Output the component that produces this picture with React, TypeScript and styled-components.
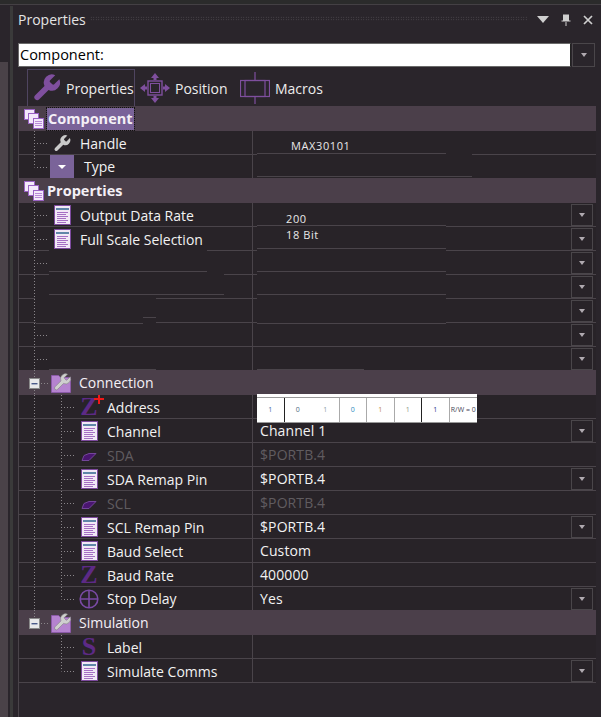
import React from 'react';
import styled, { createGlobalStyle } from 'styled-components';

const LINE = '#4a444a';
const ROW_BG = '#282328';
const HEADER_BG = '#4b3f4a';
const PURPLE = '#7a4a9c';
const SELECT = '#7a6399';

const GlobalStyle = createGlobalStyle`
	html, body {
		margin: 0;
		padding: 0;
		background: #2a252b;
	}
	#root {
		width: 601px;
		height: 717px;
		overflow: hidden;
	}
`;

const Shell = styled.div`
	display: flex;
	width: 601px;
	height: 717px;
	background: #2a252b;
	font-family: 'Open Sans', 'Noto Sans', sans-serif;
	font-size: 14px;
	color: #f0f0f0;
`;

const Rail = styled.div`
	flex: 0 0 18px;
	margin-top: 5px;
	border-top: 1px solid #2a252b;
	background:
		linear-gradient(90deg, transparent 0 10px, #3a3a3a 10px 13px, transparent 13px),
		linear-gradient(180deg, transparent 0 56px, #4a4248 56px) 0 0 / 8px 100% no-repeat;
`;

const Panel = styled.div`
	flex: 1;
	display: flex;
	flex-direction: column;
	min-width: 0;
`;

const TopEdge = styled.div`
	height: 4px;
	margin-left: -18px;
	border-bottom: 1px solid #444044;
	background: #2b2b2b;
	flex: none;
`;

const TitleBar = styled.div`
	display: flex;
	align-items: center;
	height: 27px;
	padding-top: 1px;
	margin-top: 0;
	flex: none;
	color: #e4e4e4;
	line-height: 27px;
`;

const TitleText = styled.span`
	width: 72px;
	flex: none;
`;

const Grip = styled.div`
	width: 437px;
	height: 5px;
	flex: none;
	margin-top: -3px;
	background-image: radial-gradient(#555055 0.7px, transparent 0.8px);
	background-size: 2.5px 2.5px;
`;

const TitleIcons = styled.div`
	display: flex;
	align-items: center;
	margin-left: 10px;
	color: #cfcfcf;
	gap: 12px;
`;

const ComboRow = styled.div`
	display: flex;
	height: 24px;
	margin-top: 10px;
	flex: none;
	gap: 1px;
`;

const ComboField = styled.div`
	width: 553px;
	box-sizing: border-box;
	background: #fff;
	border: 1px solid #6a6a6a;
	border-right-color: #222;
	color: #000;
	padding-left: 1px;
	line-height: 21px;
	font-size: 14.5px;
`;

const ArrowButton = styled.div<{ $size?: number }>`
	flex: none;
	box-sizing: border-box;
	width: ${p => p.$size ?? 22}px;
	height: ${p => p.$size ?? 22}px;
	border: 1px solid #4a464a;
	display: flex;
	align-items: center;
	justify-content: center;
	&::after {
		content: '';
		border-left: 3.5px solid transparent;
		border-right: 3.5px solid transparent;
		border-top: 4px solid #b0aab0;
	}
`;

const ComboButton = styled(ArrowButton)`
	width: 23px;
	height: 24px;
`;

const TabBar = styled.div`
	display: flex;
	align-items: stretch;
	height: 37px;
	margin-top: 2px;
	padding-left: 9px;
	flex: none;
`;

const Tab = styled.div<{ $active?: boolean; $width: number; $gap: number }>`
	display: flex;
	align-items: center;
	box-sizing: border-box;
	width: ${p => p.$width}px;
	gap: ${p => p.$gap}px;
	padding-left: ${p => (p.$active ? 5 : 4)}px;
	border: 1px solid ${p => (p.$active ? '#4f4560' : 'transparent')};
	border-bottom: 0;
	color: #ececec;
`;

const PropertyGrid = styled.div`
	flex: 1;
	width: 578px;
	box-sizing: border-box;
	border-left: 1px solid ${LINE};
`;

const Header = styled.div`
	display: flex;
	align-items: center;
	height: 25px;
	width: 577px;
	background: ${HEADER_BG};
`;

const HeaderLabel = styled.span<{ $bold?: boolean; $selected?: boolean }>`
	font-weight: ${p => (p.$bold ? 700 : 400)};
	font-size: ${p => (p.$bold ? 14.5 : 14)}px;
	line-height: 22px;
	margin-left: ${p => (p.$bold ? 3 : 7)}px;
	padding: 0 ${p => (p.$selected ? 1 : 0)}px;
	background: ${p => (p.$selected ? SELECT : 'transparent')};
	outline: ${p => (p.$selected ? '1px dotted #111' : 'none')};
	color: #f4f0f6;
`;

const Row = styled.div<{ $last?: boolean; $end?: boolean }>`
	position: relative;
	display: flex;
	width: 577px;
	height: ${p => (p.$last ? 23 : 24)}px;
	background: ${ROW_BG};
	box-shadow: ${p => (p.$last ? 'none' : `inset 0 -1px 0 ${LINE}`)};
`;

const NameCell = styled.div`
	display: flex;
	align-items: center;
	width: 233px;
	flex: none;
	overflow: hidden;
`;

const Label = styled.span<{ $disabled?: boolean }>`
	margin-left: 8px;
	white-space: nowrap;
	line-height: 23px;
	color: ${p => (p.$disabled ? '#605c60' : '#f2f2f2')};
`;

const ValueCell = styled.div`
	position: relative;
	flex: 1;
	display: flex;
	align-items: flex-start;
	border-left: 1px solid ${LINE};
`;

const Value = styled.div<{ $disabled?: boolean }>`
	flex: 1;
	padding-left: 7px;
	line-height: 23px;
	letter-spacing: 0.1px;
	color: ${p => (p.$disabled ? '#605c60' : '#f2f2f2')};
`;

const PastedValue = styled.div<{ $indent: number; $top: number }>`
	flex: 1;
	padding-left: ${p => p.$indent}px;
	padding-top: ${p => p.$top}px;
	font-size: 11px;
	line-height: 15px;
	letter-spacing: 0.6px;
	color: #e8e8e8;
`;

const DropButton = styled(ArrowButton)`
	margin: 1px 3px 0 0;
`;

const Mark = styled.i<{ $x: number; $w: number; $dy: number; $hide?: boolean }>`
	position: absolute;
	z-index: 1;
	left: ${p => p.$x - 19}px;
	width: ${p => p.$w}px;
	bottom: ${p => p.$dy}px;
	height: 1px;
	background: ${p => (p.$hide ? ROW_BG : LINE)};
`;

const BitField = styled.div`
	position: absolute;
	z-index: 2;
	left: 4px;
	top: -1px;
	width: 220px;
	height: 29px;
	box-sizing: border-box;
	padding: 3px 0 2px;
	background: #fff;
`;

const BitGrid = styled.div`
	display: grid;
	grid-template-columns: repeat(8, 1fr);
	height: 100%;
	border-top: 1px solid #999;
	border-bottom: 1px solid #999;
`;

const Bit = styled.div<{ $color: string; $divider: string }>`
	display: flex;
	align-items: center;
	justify-content: center;
	text-align: center;
	font-size: 7px;
	line-height: 8px;
	color: ${p => p.$color};
	border-right: 1px solid ${p => p.$divider};
	&:last-child {
		border-right: 0;
	}
`;

const TypeButton = styled.div`
	width: 24px;
	height: 23px;
	flex: none;
	margin-left: -2px;
	margin-right: 2px;
	background: ${SELECT};
	display: flex;
	align-items: center;
	justify-content: center;
	&::after {
		content: '';
		border-left: 4px solid transparent;
		border-right: 4px solid transparent;
		border-top: 4px solid #fff;
	}
`;

const IconBox = styled.span`
	width: 20px;
	height: 24px;
	flex: none;
	display: flex;
	align-items: center;
	justify-content: center;
`;

const LetterIcon = styled.span<{ $size: number }>`
	position: relative;
	font-family: 'Liberation Serif', serif;
	font-weight: 700;
	font-size: ${p => p.$size}px;
	line-height: 24px;
	color: #5d2a86;
`;

const RedPlus = styled.span`
	position: absolute;
	top: -1px;
	right: -6px;
	width: 10px;
	height: 10px;
	background:
		linear-gradient(#f01818, #f01818) center / 2px 10px no-repeat,
		linear-gradient(#f01818, #f01818) center / 10px 2px no-repeat;
`;

const WRENCH =
	'M14.7 6.3a1 1 0 0 0 0 1.4l1.6 1.6a1 1 0 0 0 1.4 0l3.77-3.77a6 6 0 0 1-7.94 7.94l-6.91 6.91a2.12 2.12 0 0 1-3-3l6.91-6.91a6 6 0 0 1 7.94-7.94l-3.76 3.76z';

function Wrench({ size, color }: { size: number; color: string }) {
	return (
		<svg width={size} height={size} viewBox="0 0 24 24">
			<path d={WRENCH} fill={color} />
		</svg>
	);
}

function DocIcon() {
	return (
		<svg width="17" height="20" viewBox="0 0 17 20">
			<rect x="0.5" y="0.5" width="16" height="19" fill="#f1e8f6" stroke="#7d4a9e" />
			<rect x="2" y="3" width="13" height="2" fill="#5f86a8" />
			{[7, 9, 11, 13, 15, 17].map(y => (
				<rect key={y} x="3" y={y} width={y % 4 === 1 ? 9 : 11} height="1" fill="#a66fc4" />
			))}
		</svg>
	);
}

function StackIcon() {
	return (
		<svg width="20" height="20" viewBox="0 0 20 20">
			{[0, 4, 9].map(o => (
				<rect key={o} x={o + 0.5} y={o + 0.5} width="10" height="10" fill="#f3e9fa" stroke="#9a63c4" />
			))}
			<rect x="9.5" y="9.5" width="10" height="10" fill="#f3e9fa" stroke="#9a63c4" />
			{[12, 14, 16].map(y => (
				<rect key={y} x="11" y={y} width="7" height="1" fill="#b98ad8" />
			))}
		</svg>
	);
}

function FolderWrench() {
	return (
		<svg width="21" height="21" viewBox="0 0 21 21">
			<path d="M0.5 3.5h7l2 2h10v15h-19z" fill="#b583d0" stroke="#8b5aa8" />
			<g transform="translate(1 0) scale(0.85)">
				<path d={WRENCH} fill="#cfcfcf" stroke="#777" strokeWidth="0.6" />
			</g>
		</svg>
	);
}

function Pin() {
	return (
		<svg width="20" height="12" viewBox="0 0 20 12">
			<path d="M0 3 L2 0 H18 L20 3" fill="none" />
			<path
				d="M5 4.5 H15 M4 2 L16 2"
				stroke="none"
				fill="none"
			/>
			<polygon points="0,4 3,4 3,0 0,0" fill="none" />
			<path d="M5 6.5 L10 4.5 L17 4.5 L10 11.5 L3 11.5 Z" fill="#4a1570" stroke="#73469a" />
		</svg>
	);
}

function CircleCross() {
	return (
		<svg width="20" height="20" viewBox="0 0 20 20" fill="none" stroke="#7a4aa5" strokeWidth="1.6">
			<circle cx="10" cy="10" r="8.8" />
			<path d="M10 1v18M1 10h18" />
		</svg>
	);
}

type IconKind = 'wrench' | 'doc' | 'z' | 'zplus' | 's' | 'pin' | 'circle';

function RowIcon({ kind }: { kind: IconKind }) {
	if (kind === 'wrench') return <IconBox><Wrench size={21} color="#c9c9c9" /></IconBox>;
	if (kind === 'doc') return <IconBox><DocIcon /></IconBox>;
	if (kind === 'pin') return <IconBox><Pin /></IconBox>;
	if (kind === 'circle') return <IconBox><CircleCross /></IconBox>;
	if (kind === 's') return <IconBox><LetterIcon $size={26}>S</LetterIcon></IconBox>;
	return (
		<IconBox>
			<LetterIcon $size={26}>
				Z{kind === 'zplus' && <RedPlus />}
			</LetterIcon>
		</IconBox>
	);
}

// tree lines: vertical and elbow dots for one row
function TreeGuide({
	level,
	height,
	outer,
	inner,
	dash = true,
}: {
	level: 1 | 2;
	height: number;
	outer: 'full' | 'half' | 'none';
	inner?: 'full' | 'half';
	dash?: boolean;
}) {
	const width = level === 1 ? 33 : 60;
	const mid = 12.5;
	return (
		<svg width={width} height={height} style={{ flex: 'none', display: 'block' }}>
			<g stroke="#8a868a" strokeDasharray="1 2" fill="none">
				{outer !== 'none' && <path d={`M15.5 0V${outer === 'full' ? height : mid}`} />}
				{level === 2 && inner && <path d={`M42.5 0V${inner === 'full' ? height : mid}`} />}
				{dash && level === 1 && <path d={`M18 ${mid}H30`} />}
				{dash && level === 2 && <path d={`M45 ${mid}H57`} />}
			</g>
		</svg>
	);
}

function HeaderGuide({ tail }: { tail: boolean }) {
	return (
		<svg width="32" height="25" style={{ flex: 'none', display: 'block' }}>
			<g stroke="#8a868a" strokeDasharray="1 2" fill="none">
				<path d="M15.5 0V8" />
				{tail && <path d="M15.5 20V25" />}
				<path d="M22 13.5H30" />
			</g>
			<rect x="10.5" y="8.5" width="10" height="10" fill="#e8e8ea" stroke="#8a8a8a" />
			<rect x="12.5" y="13" width="6" height="1.4" fill="#4a5a8a" />
		</svg>
	);
}

type MarkSpec = { x: number; w: number; dy: number; hide?: boolean };

type RowSpec = {
	label?: string;
	icon?: IconKind;
	value?: string;
	disabled?: boolean;
	drop?: boolean;
	last?: boolean;
	marks?: MarkSpec[];
	dash?: boolean;
	pasted?: { indent: number; top: number };
	bits?: boolean;
	type?: boolean;
};

const componentRows: RowSpec[] = [
	{
		label: 'Handle',
		icon: 'wrench',
		value: 'MAX30101',
		pasted: { indent: 38, top: 7 },
		marks: [
			{ x: 257, w: 215, dy: 0, hide: true },
			{ x: 257, w: 189, dy: 1 },
		],
	},
	{ label: 'Type', type: true, last: true, marks: [{ x: 257, w: 215, dy: 1 }] },
];

const propertyRows: RowSpec[] = [
	{
		label: 'Output Data Rate',
		icon: 'doc',
		value: '200',
		drop: true,
		pasted: { indent: 33, top: 8 },
		marks: [
			{ x: 257, w: 189, dy: 0, hide: true },
			{ x: 257, w: 189, dy: 1 },
		],
	},
	{
		label: 'Full Scale Selection',
		icon: 'doc',
		value: '18 Bit',
		drop: true,
		pasted: { indent: 33, top: 0 },
		marks: [
			{ x: 49, w: 158, dy: 0, hide: true },
			{ x: 257, w: 189, dy: 0, hide: true },
			{ x: 257, w: 189, dy: 2 },
		],
	},
	{
		drop: true,
		marks: [
			{ x: 49, w: 175, dy: 0, hide: true },
			{ x: 49, w: 158, dy: 3 },
			{ x: 257, w: 189, dy: 0, hide: true },
			{ x: 257, w: 189, dy: 3 },
		],
	},
	{
		drop: true,
		dash: false,
		marks: [
			{ x: 35, w: 121, dy: 0, hide: true },
			{ x: 49, w: 175, dy: 4 },
			{ x: 257, w: 189, dy: 0, hide: true },
			{ x: 257, w: 189, dy: 4 },
		],
	},
	{
		drop: true,
		dash: false,
		marks: [
			{ x: 36, w: 120, dy: 0, hide: true },
			{ x: 36, w: 107, dy: -1 },
			{ x: 143, w: 13, dy: 5 },
			{ x: 257, w: 189, dy: 0, hide: true },
			{ x: 257, w: 189, dy: -1 },
		],
	},
	{ drop: true },
	{
		drop: true,
		last: true,
		marks: [
			{ x: 49, w: 107, dy: 0 },
			{ x: 257, w: 107, dy: 0 },
		],
	},
];

const connectionRows: RowSpec[] = [
	{ label: 'Address', icon: 'zplus', bits: true },
	{ label: 'Channel', icon: 'doc', value: 'Channel 1', drop: true },
	{ label: 'SDA', icon: 'pin', value: '$PORTB.4', disabled: true },
	{ label: 'SDA Remap Pin', icon: 'doc', value: '$PORTB.4', drop: true },
	{ label: 'SCL', icon: 'pin', value: '$PORTB.4', disabled: true },
	{ label: 'SCL Remap Pin', icon: 'doc', value: '$PORTB.4', drop: true },
	{ label: 'Baud Select', icon: 'doc', value: 'Custom' },
	{ label: 'Baud Rate', icon: 'z', value: '400000' },
	{ label: 'Stop Delay', icon: 'circle', value: 'Yes', drop: true, last: true },
];

const simulationRows: RowSpec[] = [
	{ label: 'Label', icon: 's' },
	{ label: 'Simulate Comms', icon: 'doc', drop: true },
];

const bits = [
	{ text: '1', color: '#3a6ea8', divider: '#222' },
	{ text: '0', color: '#4a6a80', divider: 'transparent' },
	{ text: '1', color: '#8aa0a8', divider: '#aaa' },
	{ text: '0', color: '#2a8ac0', divider: '#aaa' },
	{ text: '1', color: '#c08a50', divider: '#aaa' },
	{ text: '1', color: '#8a9a8a', divider: '#222' },
	{ text: '1', color: '#22408a', divider: '#aaa' },
	{ text: 'R/W = 0', color: '#445', divider: 'transparent' },
];

function PropertyRow({
	row,
	level,
	outer,
	inner,
}: {
	row: RowSpec;
	level: 1 | 2;
	outer: 'full' | 'half' | 'none';
	inner?: 'full' | 'half';
}) {
	return (
		<Row $last={row.last}>
			<NameCell>
				<TreeGuide
					level={level}
					height={row.last ? 23 : 24}
					outer={outer}
					inner={inner}
					dash={row.dash !== false}
				/>
				{row.type && <TypeButton />}
				{row.icon && <RowIcon kind={row.icon} />}
				{row.label && <Label $disabled={row.disabled}>{row.label}</Label>}
			</NameCell>
			<ValueCell>
				{row.bits && (
					<BitField>
						<BitGrid>
							{bits.map((b, i) => (
								<Bit key={i} $color={b.color} $divider={b.divider}>
									{b.text}
								</Bit>
							))}
						</BitGrid>
					</BitField>
				)}
				{row.pasted ? (
					<PastedValue $indent={row.pasted.indent} $top={row.pasted.top}>
						{row.value}
					</PastedValue>
				) : (
					<Value $disabled={row.disabled}>{row.value}</Value>
				)}
				{row.drop && <DropButton />}
			</ValueCell>
			{row.marks?.map((m, i) => (
				<Mark key={i} $x={m.x} $w={m.w} $dy={m.dy} $hide={m.hide} />
			))}
		</Row>
	);
}

function App() {
	return (
		<>
			<GlobalStyle />
			<Shell>
				<Rail />
				<Panel>
					<TopEdge />
					<TitleBar>
						<TitleText>Properties</TitleText>
						<Grip />
						<TitleIcons>
							<svg width="12" height="7" viewBox="0 0 12 7">
								<path d="M0 0h12L6 7z" fill="#cfcfcf" />
							</svg>
							<svg width="10" height="12" viewBox="0 0 10 12">
								<path d="M2 0.5h6v6h1.5v1h-9v-1H2zM4.5 8h1v4h-1z" fill="#cfcfcf" />
							</svg>
							<svg width="10" height="10" viewBox="0 0 10 10">
								<path d="M1 1l8 8M9 1l-8 8" stroke="#cfcfcf" strokeWidth="1.7" />
							</svg>
						</TitleIcons>
					</TitleBar>
					<ComboRow>
						<ComboField>Component:</ComboField>
						<ComboButton />
					</ComboRow>
					<TabBar>
						<Tab $active $width={108} $gap={6}>
							<svg width="27" height="28" viewBox="2 2 20 20">
								<path d={WRENCH} fill="#7f4f9e" />
							</svg>
							Properties
						</Tab>
						<Tab $width={100} $gap={5}>
							<svg width="30" height="30" viewBox="0 0 30 30" fill="none">
								<rect x="8" y="8" width="14" height="14" stroke="#7f4f9e" strokeWidth="1.4" />
								<rect x="10.5" y="10.5" width="9" height="9" stroke="#7f4f9e" strokeWidth="1" />
								<path
									d="M15 0l4 5h-2.500v2h-3v-2H11zM15 30l4-5h-2.500v-2h-3v2H11zM0 15l5-4v2.500h2v3H5V19zM30 15l-5-4v2.500h-2v3h2V19z"
									fill="#7f4f9e"
								/>
							</svg>
							Position
						</Tab>
						<Tab $width={95} $gap={5}>
							<svg width="30" height="32" viewBox="0 0 30 32" fill="none" stroke="#7f4f9e" strokeWidth="1.2">
								<rect x="0.5" y="8.500" width="29" height="16" />
								<rect x="5" y="8.500" width="20" height="16" />
								<path d="M15 0v8M15 25v7" />
							</svg>
							Macros
						</Tab>
					</TabBar>
					<PropertyGrid>
						<Header>
							<span style={{ width: 5, flex: 'none' }} />
							<StackIcon />
							<HeaderLabel $bold $selected>Component</HeaderLabel>
						</Header>
						{componentRows.map((r, i) => (
							<PropertyRow key={i} row={r} level={1} outer={i === 1 ? 'half' : 'full'} />
						))}
						<Header>
							<span style={{ width: 5, flex: 'none' }} />
							<StackIcon />
							<HeaderLabel $bold>Properties</HeaderLabel>
						</Header>
						{propertyRows.map((r, i) => (
							<PropertyRow key={i} row={r} level={1} outer="full" />
						))}
						<Header>
							<HeaderGuide tail />
							<FolderWrench />
							<HeaderLabel>Connection</HeaderLabel>
						</Header>
						{connectionRows.map((r, i) => (
							<PropertyRow
								key={i}
								row={r}
								level={2}
								outer="full"
								inner={i === connectionRows.length - 1 ? 'half' : 'full'}
							/>
						))}
						<Header>
							<HeaderGuide tail={false} />
							<FolderWrench />
							<HeaderLabel>Simulation</HeaderLabel>
						</Header>
						{simulationRows.map((r, i) => (
							<PropertyRow
								key={i}
								row={r}
								level={2}
								outer="none"
								inner={i === simulationRows.length - 1 ? 'half' : 'full'}
							/>
						))}
					</PropertyGrid>
				</Panel>
			</Shell>
		</>
	);
}

export default App;
